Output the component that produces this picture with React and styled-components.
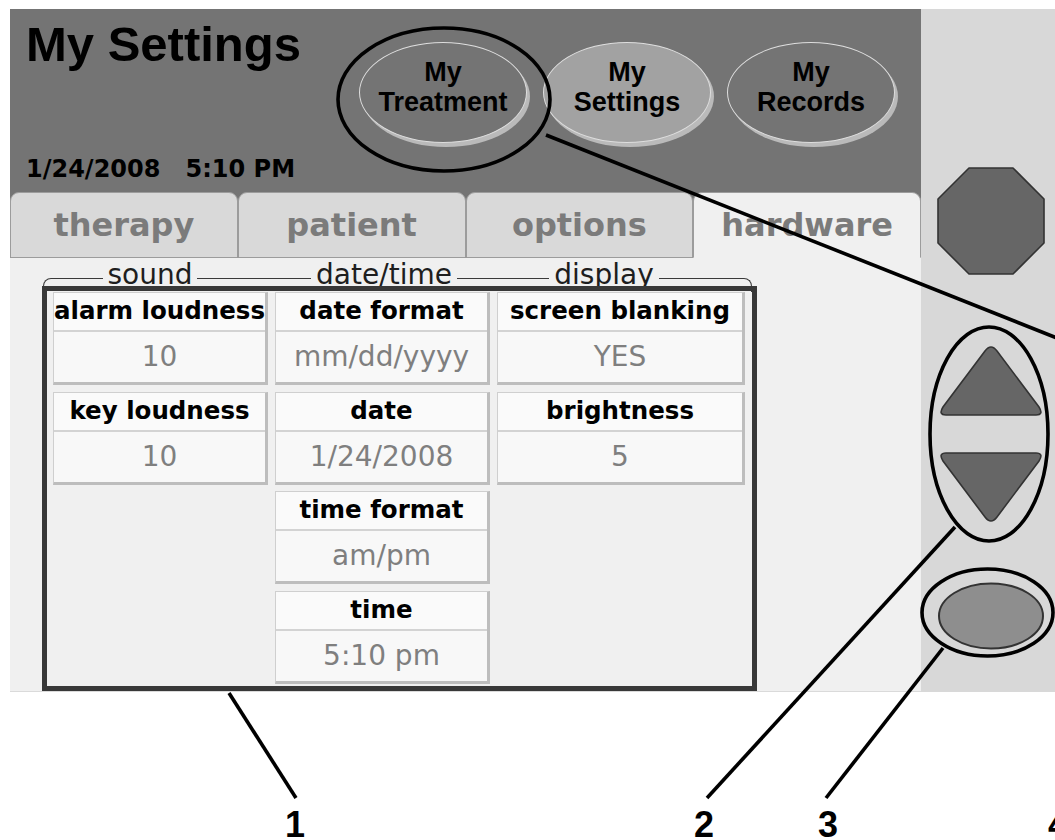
import React from "react";
import styled, { createGlobalStyle } from "styled-components";

const GlobalStyle = createGlobalStyle`
  html, body { margin: 0; padding: 0; background: #ffffff; }
  body { font-family: "DejaVu Sans", sans-serif; }
  *, *::before, *::after { box-sizing: border-box; }
`;

const Page = styled.div`
  position: relative;
  width: 1055px;
  height: 840px;
  overflow: hidden;
  padding: 9px 0 0 10px;
`;

const Device = styled.div`
  display: flex;
  height: 683px;
`;

const Screen = styled.div`
  width: 911px;
  display: flex;
  flex-direction: column;
  background: #747474;
`;

const Header = styled.header`
  height: 183px;
  display: grid;
  grid-template-columns: 349px auto;
`;

const TitleBlock = styled.div`
  display: flex;
  flex-direction: column;
  justify-content: space-between;
  padding: 11px 0 11px 16px;
`;

const Title = styled.h1`
  margin: 0;
  font: bold 49px/49px "Liberation Sans", Arial, sans-serif;
  color: #000;
`;

const DateLine = styled.div`
  font: bold 24px/24px "DejaVu Sans", sans-serif;
  color: #000;
  white-space: pre;
`;

const Nav = styled.nav`
  display: flex;
  align-items: flex-start;
  gap: 16px;
  padding-top: 33px;
`;

const NavOval = styled.div`
  width: 168px;
  height: 101px;
  border-radius: 50%;
  background: ${(p) => (p.$active ? "#a2a2a2" : "#747474")};
  border: 1px solid #dedede;
  box-shadow: 3px 4px 0 #bababa;
  display: flex;
  flex-direction: column;
  align-items: center;
  justify-content: center;
  text-align: center;
  padding-bottom: 12px;
  font: bold 27px/30px "Liberation Sans", Arial, sans-serif;
  color: #000;
`;

const TabBar = styled.div`
  display: flex;
  height: 66px;
`;

const Tab = styled.div`
  flex: 1;
  display: flex;
  align-items: center;
  justify-content: center;
  border: 1px solid #9c9c9c;
  border-bottom: ${(p) => (p.$active ? "1px solid #f0f0f0" : "1px solid #9c9c9c")};
  border-radius: 9px 9px 0 0;
  background: ${(p) => (p.$active ? "#f0f0f0" : "#d9d9d9")};
  font: bold 32px/32px "DejaVu Sans", sans-serif;
  color: #7b7b7b;
`;

const Content = styled.main`
  flex: 1;
  background: #f0f0f0;
  border-bottom: 1px solid #dadada;
  padding-left: 32px;
  display: flex;
  flex-direction: column;
`;

const Legend = styled.div`
  position: relative;
  width: 715px;
  height: 28px;
  display: grid;
  grid-template-columns: 216px 252px 188px 1fr;
  &::before {
    content: "";
    position: absolute;
    top: 20px;
    left: 1px;
    right: 5px;
    height: 14px;
    border: 1px solid #3a3a3a;
    border-bottom: none;
    border-radius: 8px 8px 0 0;
  }
`;

const LegendLabel = styled.span`
  position: relative;
  justify-self: center;
  padding: 3px 5px 0;
  background: #f0f0f0;
  font: 28px/28px "DejaVu Sans", sans-serif;
  color: #1e1e1e;
`;

const Frame = styled.section`
  position: relative;
  width: 715px;
  flex: 1;
  border: 5px solid #383838;
  padding: 1px 0 0 6px;
  display: flex;
  align-items: flex-start;
  gap: 7px;
`;

const Column = styled.div`
  width: ${(p) => p.$w}px;
  display: flex;
  flex-direction: column;
  gap: 6.5px;
`;

const Cell = styled.div`
  height: 93px;
  display: flex;
  flex-direction: column;
  background: #f8f8f8;
  border-top: 1px solid #cfcfcf;
  border-left: 1px solid #cfcfcf;
  border-right: 3px solid #bdbdbd;
  border-bottom: 3px solid #bdbdbd;
`;

const CellLabel = styled.div`
  height: 39px;
  line-height: 35px;
  text-align: center;
  white-space: nowrap;
  font-weight: bold;
  font-size: 24.5px;
  color: #000;
  background: #fafafa;
  border-bottom: 2px solid #d3d3d3;
`;

const CellValue = styled.div`
  flex: 1;
  line-height: 50px;
  text-align: center;
  white-space: nowrap;
  font-size: 28px;
  color: #7f7f7f;
`;

const SidePanel = styled.aside`
  width: 134px;
  background: #d8d8d8;
  display: flex;
  flex-direction: column;
  align-items: center;
  padding: 158px 0 0 5px;
`;

const Key = styled.svg`
  display: block;
  margin-top: ${(p) => p.$mt || 0}px;
`;

const Overlay = styled.svg`
  position: absolute;
  top: 0;
  left: 0;
  width: 1055px;
  height: 840px;
  pointer-events: none;
  fill: none;
  stroke: #000;
  stroke-width: 3.6;
`;

const Callout = styled.span`
  position: absolute;
  top: 811px;
  left: ${(p) => p.$x - 20}px;
  width: 40px;
  text-align: center;
  font: bold 36px/28px "Liberation Sans", Arial, sans-serif;
  color: #000;
`;

const cells = [
  { w: 215, items: [["alarm loudness", "10"], ["key loudness", "10"]] },
  {
    w: 215,
    items: [
      ["date format", "mm/dd/yyyy"],
      ["date", "1/24/2008"],
      ["time format", "am/pm"],
      ["time", "5:10 pm"],
    ],
  },
  { w: 248, items: [["screen blanking", "YES"], ["brightness", "5"]] },
];

const tabs = ["therapy", "patient", "options", "hardware"];

const navItems = [
  { key: "treatment", label: "Treatment" },
  { key: "settings", label: "Settings", active: true },
  { key: "records", label: "Records" },
];

export default function App() {
  return (
    <>
      <GlobalStyle />
      <Page>
        <Device>
          <Screen>
            <Header>
              <TitleBlock>
                <Title>My Settings</Title>
                <DateLine>{"1/24/2008   5:10 PM"}</DateLine>
              </TitleBlock>
              <Nav>
                {navItems.map((n) => (
                  <NavOval key={n.key} $active={n.active}>
                    <span>My</span>
                    <span>{n.label}</span>
                  </NavOval>
                ))}
              </Nav>
            </Header>
            <TabBar>
              {tabs.map((t) => (
                <Tab key={t} $active={t === "hardware"}>
                  {t}
                </Tab>
              ))}
            </TabBar>
            <Content>
              <Legend>
                <LegendLabel>sound</LegendLabel>
                <LegendLabel>date/time</LegendLabel>
                <LegendLabel>display</LegendLabel>
              </Legend>
              <Frame>
                {cells.map((col, i) => (
                  <Column key={i} $w={col.w}>
                    {col.items.map(([label, value]) => (
                      <Cell key={label}>
                        <CellLabel>{label}</CellLabel>
                        <CellValue>{value}</CellValue>
                      </Cell>
                    ))}
                  </Column>
                ))}
              </Frame>
            </Content>
          </Screen>
          <SidePanel>
            <Key width="108" height="108" viewBox="0 0 108 108">
              <polygon
                points="32,1 76,1 107,32 107,76 76,107 32,107 1,76 1,32"
                fill="#666666"
                stroke="#333333"
                strokeWidth="1.6"
                strokeLinejoin="round"
              />
            </Key>
            <Key $mt={68} width="106" height="74" viewBox="0 0 106 74">
              <path
                d="M47,8 Q53,0 59,8 L101,64 Q106,72 98,72 L8,72 Q0,72 5,64 Z"
                fill="#666666"
                stroke="#333333"
                strokeWidth="1.6"
              />
            </Key>
            <Key $mt={34} width="106" height="74" viewBox="0 0 106 74">
              <path
                d="M8,2 L98,2 Q106,2 101,10 L59,66 Q53,74 47,66 L5,10 Q0,2 8,2 Z"
                fill="#666666"
                stroke="#333333"
                strokeWidth="1.6"
              />
            </Key>
            <Key $mt={56} width="108" height="70" viewBox="0 0 108 70">
              <ellipse
                cx="54"
                cy="35"
                rx="52"
                ry="32.5"
                fill="#8e8e8e"
                stroke="#333333"
                strokeWidth="2"
              />
            </Key>
          </SidePanel>
        </Device>

        <Overlay viewBox="0 0 1055 840">
          <ellipse cx="444" cy="99.5" rx="106" ry="71.5" />
          <line x1="546" y1="135" x2="1062" y2="340" />
          <ellipse cx="989" cy="434" rx="59" ry="107" />
          <line x1="955" y1="527" x2="707" y2="798" />
          <ellipse cx="987.5" cy="612.5" rx="65.5" ry="43.5" />
          <line x1="943" y1="648" x2="826" y2="798" />
          <line x1="229" y1="693" x2="296" y2="798" />
        </Overlay>
        <Callout $x={295}>1</Callout>
        <Callout $x={704}>2</Callout>
        <Callout $x={828}>3</Callout>
        <Callout $x={1058}>4</Callout>
      </Page>
    </>
  );
}
